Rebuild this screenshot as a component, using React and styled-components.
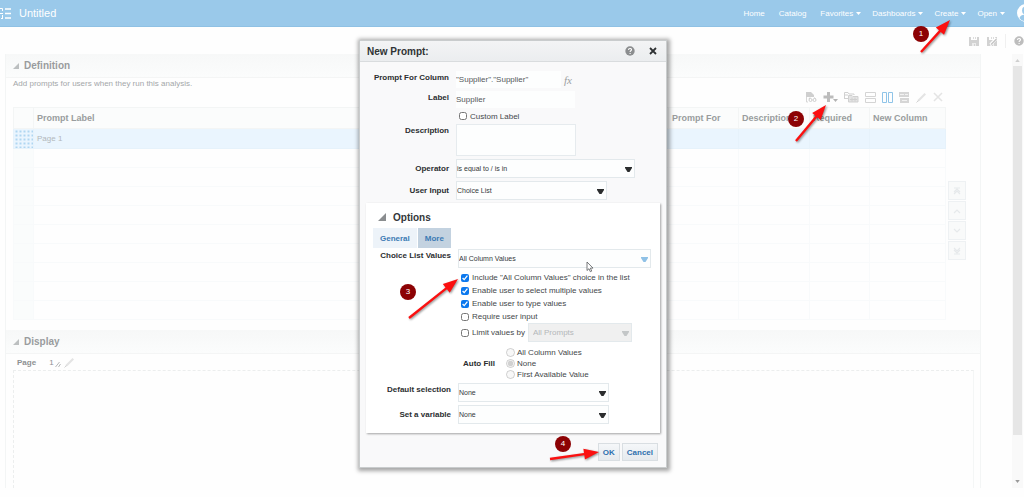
import { useState } from "react";
import styled, { createGlobalStyle } from "styled-components";

const EMPTY_ROWS = [1, 2, 3, 4, 5, 6, 7, 8, 9];

const App = () => {
  const [checks, setChecks] = useState({
    all: true,
    multiple: true,
    type: true,
    require: false,
  });

  const toggle = (key) => () =>
    setChecks((prev) => ({ ...prev, [key]: !prev[key] }));

  return (
    <Page>
      <GlobalStyle />
      <TopBar>
        <ListIcon />
        <AppTitle>Untitled</AppTitle>
        <Nav>
          <NavLink href="#home">Home</NavLink>
          <NavLink href="#catalog">Catalog</NavLink>
          <NavMenu label="Favorites" />
          <NavMenu label="Dashboards" />
          <NavMenu label="Create" />
          <NavMenu label="Open" />
          <Avatar />
        </Nav>
      </TopBar>

      <Toolbar>
        <IconButton aria-label="Save">
          <SaveIcon />
        </IconButton>
        <IconButton aria-label="Save as">
          <SaveIcon edit />
        </IconButton>
        <Divider />
        <IconButton aria-label="Help">
          <HelpIcon size={10} color="#bdbdbd" />
        </IconButton>
      </Toolbar>

      <Workspace>
        <Sections>
          <SectionHeader>
            <Disclosure color="#bcbfc0" />
            <SectionTitle>Definition</SectionTitle>
          </SectionHeader>
          <Definition>
            <Hint>Add prompts for users when they run this analysis.</Hint>
            <TableToolbar>
              <IconButton aria-label="Preview">
                <PreviewIcon />
              </IconButton>
              <IconButton aria-label="New">
                <PlusIcon />
              </IconButton>
              <IconButton aria-label="Duplicate">
                <FoldersIcon />
              </IconButton>
              <IconButton aria-label="Row based layout">
                <RowsIcon />
              </IconButton>
              <IconButton aria-label="Column based layout">
                <ColumnsIcon />
              </IconButton>
              <IconButton aria-label="Insert page break">
                <BreakIcon />
              </IconButton>
              <IconButton aria-label="Edit">
                <PencilIcon />
              </IconButton>
              <IconButton aria-label="Delete">
                <CrossIcon />
              </IconButton>
            </TableToolbar>
            <TableArea>
              <Table>
                <thead>
                  <tr>
                    <HeadCell $width="20px" />
                    <HeadCell>Prompt Label</HeadCell>
                    <HeadCell $width="70px">Prompt For</HeadCell>
                    <HeadCell $width="71px">Description</HeadCell>
                    <HeadCell $width="60px">Required</HeadCell>
                    <HeadCell $width="76px">New Column</HeadCell>
                  </tr>
                </thead>
                <tbody>
                  <SelectedRow>
                    <GripCell />
                    <Cell>Page 1</Cell>
                    <Cell />
                    <Cell />
                    <Cell />
                    <Cell />
                  </SelectedRow>
                  {EMPTY_ROWS.map((row) => (
                    <tr key={row}>
                      <Cell $head />
                      <Cell />
                      <Cell />
                      <Cell />
                      <Cell />
                      <Cell />
                    </tr>
                  ))}
                </tbody>
              </Table>
              <OrderButtons>
                <OrderButton aria-label="Move to top">
                  <OrderIcon d="M2 2h6M2 6l3-3 3 3M2 8l3-3 3 3" />
                </OrderButton>
                <OrderButton aria-label="Move up">
                  <OrderIcon d="M2 7l3-3 3 3" />
                </OrderButton>
                <OrderButton aria-label="Move down">
                  <OrderIcon d="M2 3l3 3 3-3" />
                </OrderButton>
                <OrderButton aria-label="Move to bottom">
                  <OrderIcon d="M2 8h6M2 2l3 3 3-3M2 4l3 3 3-3" />
                </OrderButton>
              </OrderButtons>
            </TableArea>
          </Definition>

          <SectionHeader>
            <Disclosure color="#bcbfc0" />
            <SectionTitle>Display</SectionTitle>
          </SectionHeader>
          <PageRow>
            <b>Page</b>
            <PageNumber>1</PageNumber>
            <SlashesIcon />
            <PencilIcon />
          </PageRow>
          <Canvas />
        </Sections>
        <ScrollTrack>
          <ScrollArrow up />
          <ScrollThumb />
          <ScrollArrow />
        </ScrollTrack>
      </Workspace>

      <Overlay>
        <Dialog role="dialog" aria-labelledby="dialog-title">
          <DialogHeader>
            <DialogTitle id="dialog-title">New Prompt:</DialogTitle>
            <IconButton aria-label="Help">
              <HelpIcon size={10} color="#8b8d8f" />
            </IconButton>
            <IconButton aria-label="Close">
              <CloseIcon />
            </IconButton>
          </DialogHeader>

          <DialogBody>
            <Row>
              <Label htmlFor="column">Prompt For Column</Label>
              <Inline>
                <TextInput
                  id="column"
                  $width="105px"
                  defaultValue={'"Supplier"."Supplier"'}
                />
                <Formula>fx</Formula>
              </Inline>
            </Row>
            <Row>
              <Label htmlFor="label">Label</Label>
              <TextInput id="label" $width="119px" defaultValue="Supplier" />
            </Row>
            <Row>
              <span />
              <CheckLabel $short>
                <Tick type="checkbox" />
                Custom Label
              </CheckLabel>
            </Row>
            <Row>
              <Label htmlFor="description">Description</Label>
              <TextArea id="description" />
            </Row>
            <Row $centered>
              <Label htmlFor="operator">Operator</Label>
              <Dropdown id="operator" width="179px" value="is equal to / is in" />
            </Row>
            <Row $centered>
              <Label htmlFor="input">User Input</Label>
              <Dropdown id="input" width="151px" value="Choice List" />
            </Row>
          </DialogBody>

          <Options>
            <OptionsHeader>
              <Disclosure color="#8a8d8f" size={8} />
              Options
            </OptionsHeader>
            <Tabs>
              <Tab type="button">General</Tab>
              <Tab type="button" $active>
                More
              </Tab>
            </Tabs>
            <OptionRow>
              <Label htmlFor="values">Choice List Values</Label>
              <div>
                <Dropdown
                  id="values"
                  width="193px"
                  value="All Column Values"
                  arrow="#8fc1e6"
                />
                <CheckList>
                  <CheckLabel>
                    <Tick
                      type="checkbox"
                      checked={checks.all}
                      onChange={toggle("all")}
                    />
                    Include "All Column Values" choice in the list
                  </CheckLabel>
                  <CheckLabel>
                    <Tick
                      type="checkbox"
                      checked={checks.multiple}
                      onChange={toggle("multiple")}
                    />
                    Enable user to select multiple values
                  </CheckLabel>
                  <CheckLabel>
                    <Tick
                      type="checkbox"
                      checked={checks.type}
                      onChange={toggle("type")}
                    />
                    Enable user to type values
                  </CheckLabel>
                  <CheckLabel>
                    <Tick
                      type="checkbox"
                      checked={checks.require}
                      onChange={toggle("require")}
                    />
                    Require user input
                  </CheckLabel>
                  <Inline>
                    <CheckLabel>
                      <Tick type="checkbox" />
                      Limit values by
                    </CheckLabel>
                    <Dropdown
                      width="104px"
                      value="All Prompts"
                      arrow="#c3c6c7"
                      aria-label="Limit values by"
                      disabled
                    />
                  </Inline>
                </CheckList>
                <AutoFill role="radiogroup" aria-labelledby="auto-fill">
                  <b id="auto-fill">Auto Fill</b>
                  <div>
                    <RadioLabel>
                      <Radio type="radio" name="fill" disabled />
                      All Column Values
                    </RadioLabel>
                    <RadioLabel>
                      <Radio type="radio" name="fill" defaultChecked disabled />
                      None
                    </RadioLabel>
                    <RadioLabel>
                      <Radio type="radio" name="fill" disabled />
                      First Available Value
                    </RadioLabel>
                  </div>
                </AutoFill>
              </div>
            </OptionRow>
            <OptionRow>
              <Label htmlFor="selection">Default selection</Label>
              <Dropdown id="selection" width="151px" value="None" />
            </OptionRow>
            <OptionRow $centered>
              <Label htmlFor="variable">Set a variable</Label>
              <Dropdown id="variable" width="151px" value="None" />
            </OptionRow>
          </Options>

          <DialogFooter>
            <Button type="button">OK</Button>
            <Button type="button">Cancel</Button>
          </DialogFooter>

          <Step $left="40px" $top="243px">
            3
          </Step>
          <Arrow left="44px" top="232px" from={[5, 45]} to={[54, 6]} />
          <Step $left="195px" $top="395px">
            4
          </Step>
          <Arrow left="185px" top="395px" from={[5, 23]} to={[54, 16]} />
          <Cursor />
        </Dialog>
      </Overlay>

      <Step $right="95px" $top="26px">
        1
      </Step>
      <Arrow right="48px" top="15px" from={[5, 37]} to={[34, 5]} />
      <Step $right="220px" $top="111px">
        2
      </Step>
      <Arrow right="173px" top="100px" from={[5, 41]} to={[35, 5]} />
    </Page>
  );
};

export default App;

const NavMenu = ({ label }) => (
  <MenuButton type="button">
    {label}
    <svg width="5" height="4" viewBox="0 0 5 4">
      <path d="M0 0h5L2.500 3z" fill="#fff" />
    </svg>
  </MenuButton>
);

const Dropdown = ({ width, value, arrow = "#2b2d2e", disabled, ...rest }) => (
  <SelectBox $width={width} $disabled={disabled}>
    <Select disabled={disabled} {...rest}>
      <option>{value}</option>
    </Select>
    <svg width="7" height="5" viewBox="0 0 7 5">
      <path d="M0 0h7v1L4.500 5h-2L0 1z" fill={arrow} />
    </svg>
  </SelectBox>
);

const Arrow = ({ from, to, ...place }) => {
  const [x1, y1] = from;
  const [x2, y2] = to;
  const length = Math.hypot(x2 - x1, y2 - y1);
  const angle = (Math.atan2(y2 - y1, x2 - x1) * 180) / Math.PI;
  const neck = length - 15;
  return (
    <ArrowSvg width="60" height="54" $place={place}>
      <g transform={`translate(${x1} ${y1}) rotate(${angle})`} fill="#fb1010">
        <path
          d={`M0 -1.2H${neck}V-5.5L${length} 0L${neck} 5.5V1.2H0z`}
        />
      </g>
    </ArrowSvg>
  );
};

const ListIcon = () => (
  <svg width="11" height="14" viewBox="0 0 11 14" fill="none" stroke="#fff">
    <path d="M5 3h6M5 7.500h6M5 12h6" strokeWidth="1.300" />
    <path d="M0 2.500h2.500M2.500 2.500V5M0 7.500h3M2.500 9v4M1 12.500h2" />
  </svg>
);

const Avatar = () => (
  <AvatarSvg width="20" height="20" viewBox="0 0 20 20">
    <circle cx="10" cy="10" r="9" fill="#fff" />
    <circle cx="10" cy="7.5" r="4" fill="#9ac9ea" />
    <path d="M3.500 15c1-3.200 4-3.200 6.500-3.200s5.500 0 6.500 3.200a8 8 0 0 1-13 0z" fill="#9ac9ea" />
  </AvatarSvg>
);

const SaveIcon = ({ edit }) => (
  <svg width="10" height="10" viewBox="0 0 10 10">
    <path d="M0 1h2v3h6V1h2v9H0z" fill="#d2d2d2" />
    <path d="M4 1h1v2H4zM6 1h1v2H6z" fill="#dcdcdc" />
    <path d="M3 7h4v3H6V8H5v2H3z" fill="#ececec" />
    {edit && <path d="M3.500 8.500L9.500 2.500" stroke="#fff" strokeWidth="3" />}
    {edit && <path d="M4 8.500L9.500 3" stroke="#c2c2c2" strokeWidth="1.300" />}
  </svg>
);

const HelpIcon = ({ size, color }) => (
  <svg width={size} height={size} viewBox="0 0 10 10">
    <circle cx="5" cy="5" r="4.700" fill={color} />
    <path
      d="M3.500 4c0-2 3-2 3-.2 0 1-1.400 1-1.400 2.100M5.100 7v1"
      fill="none"
      stroke="#fff"
      strokeWidth="1.100"
    />
  </svg>
);

const CloseIcon = () => (
  <svg width="8" height="8" viewBox="0 0 8 8">
    <path d="M1 1l6 6M7 1L1 7" stroke="#2e3133" strokeWidth="1.800" />
  </svg>
);

const PreviewIcon = () => (
  <svg width="12" height="11" viewBox="0 0 12 11">
    <path d="M1 0h5l3 3v2H1z" fill="#cfcfcf" />
    <path d="M1.500 5v5H3" fill="none" stroke="#d6d6d6" />
    <path
      d="M4 8a1.500 1.500 0 1 0 3 0a1.500 1.500 0 1 0-3 0M8 8a1.500 1.500 0 1 0 3 0a1.500 1.500 0 1 0-3 0M4 7l1-1.500M10.500 7L9.500 5.500"
      fill="none"
      stroke="#cdcdcd"
    />
  </svg>
);

const PlusIcon = () => (
  <svg width="15" height="11" viewBox="0 0 15 11">
    <path d="M4 0h3v3.500h3.500v3H7V10H4V6.500H.5v-3H4z" fill="#bcbcbc" />
    <path d="M10 7h5l-2.500 3z" fill="#b3b3b3" />
  </svg>
);

const FoldersIcon = () => (
  <svg width="15" height="11" viewBox="0 0 15 11" fill="none" stroke="#d0d0d0">
    <path d="M.5 7V.5h3.500l1 1.500h5V3M.5 6.500H4M1 3h3" />
    <path d="M4.500 10V3.500H8l1 1h5V10z" fill="#e4e4e4" />
    <path d="M6 7.500h7M8 5.500v4M11 5.500v4" />
  </svg>
);

const RowsIcon = () => (
  <svg width="11" height="11" viewBox="0 0 11 11" fill="none" stroke="#d4d4d4">
    <path d="M.5 .5h10v4H.5zM.5 6.500h10v4H.5z" />
  </svg>
);

const ColumnsIcon = () => (
  <svg width="11" height="11" viewBox="0 0 11 11" fill="none" stroke="#8fc4e8">
    <path d="M.5 .5h4v10h-4zM6.500 .5h4v10h-4z" />
  </svg>
);

const BreakIcon = () => (
  <svg width="11" height="11" viewBox="0 0 11 11">
    <path d="M0 0h10v5H0zM1 6h9v5H1z" fill="#d6d6d6" />
    <path d="M1 2.500h4M6 2.500h3M3 8.500h5" stroke="#f2f2f2" />
  </svg>
);

const PencilIcon = () => (
  <svg width="11" height="11" viewBox="0 0 11 11">
    <path d="M1 10L2 7.500 8.500 1 10 2.500 3.500 9z" fill="#e4e4e4" />
    <path d="M.5 10.500L2.500 8.500" stroke="#d2d2d2" />
  </svg>
);

const CrossIcon = () => (
  <svg width="10" height="10" viewBox="0 0 10 10">
    <path d="M1 1l8 8M9 1L1 9" stroke="#e4e4e4" strokeWidth="1.600" />
  </svg>
);

const SlashesIcon = () => (
  <svg width="6" height="12" viewBox="0 0 6 12">
    <path d="M.5 11l4-5M3.500 11l2-3" stroke="#b4b6b7" />
  </svg>
);

const OrderIcon = ({ d }) => (
  <svg width="10" height="10" viewBox="0 0 10 10">
    <path d={d} fill="none" stroke="#e6e9eb" strokeWidth="1.200" />
  </svg>
);

const Disclosure = ({ color, size = 6 }) => (
  <svg width={size} height={size} viewBox="0 0 8 8">
    <path d="M8 0v8H0z" fill={color} />
  </svg>
);

const ScrollArrow = ({ up }) => (
  <svg width="5" height="3" viewBox="0 0 6 4">
    <path d={up ? "M3 0l3 4H0z" : "M0 0h6L3 4z"} fill={up ? "#cfcfcf" : "#9a9a9a"} />
  </svg>
);

const Cursor = () => (
  <CursorSvg width="8" height="12" viewBox="0 0 8 12">
    <path
      d="M1 1v8.500l2-1.800 1.300 3 1.400-.6-1.300-3H7z"
      fill="#fff"
      stroke="#55595c"
      strokeWidth=".8"
    />
  </CursorSvg>
);

const GlobalStyle = createGlobalStyle`
  * {
    box-sizing: border-box;
  }

  body {
    margin: 0;
    background-color: #fefefe;
  }

  body, button, input, select, textarea {
    font-family: "Liberation Sans", Arial, sans-serif;
    font-size: 8px;
  }

  svg {
    display: block;
    flex: none;
  }
`;

const Page = styled.div`
  position: relative;
  display: flex;
  flex-direction: column;
  min-height: 100vh;
  padding-bottom: 9px;
  overflow: hidden;
  color: #55595c;
`;

const TopBar = styled.header`
  display: flex;
  align-items: center;
  height: 27px;
  overflow: hidden;
  background-color: #9ac9ea;
  border-bottom: 1px solid #8fc1e4;
  color: #fff;
`;

const AppTitle = styled.h1`
  margin: 0 0 0 8px;
  font-size: 11px;
  font-weight: 400;
`;

const Nav = styled.nav`
  display: flex;
  align-items: center;
  gap: 11px;
  margin-left: auto;
`;

const NavLink = styled.a`
  margin-right: 3px;
  color: #fff;
  text-decoration: none;
`;

const MenuButton = styled.button`
  display: flex;
  align-items: center;
  gap: 3px;
  padding: 0;
  border: none;
  background: none;
  color: #fff;

  svg {
    margin-top: 2px;
  }
`;

const AvatarSvg = styled.svg`
  margin-right: -12px;
`;

const Toolbar = styled.div`
  display: flex;
  align-items: center;
  justify-content: flex-end;
  gap: 8px;
  height: 27px;
`;

const IconButton = styled.button`
  display: flex;
  padding: 0;
  border: none;
  background: none;
  cursor: pointer;
`;

const Divider = styled.span`
  width: 1px;
  height: 14px;
  background-color: #f0f0f0;
`;

const Workspace = styled.div`
  display: flex;
  flex: 1;
  padding: 0 1px 0 5px;
`;

const Sections = styled.main`
  display: flex;
  flex: 1;
  flex-direction: column;
  margin-right: 31px;
  border: solid #f3f5f5;
  border-width: 0 1px;
`;

const SectionHeader = styled.div`
  display: flex;
  align-items: center;
  gap: 5px;
  height: 24px;
  padding: 0 7px;
  background: linear-gradient(#f7f8f8, #fbfcfc);
  border-bottom: 1px solid #f4f5f5;
`;

const SectionTitle = styled.h2`
  margin: 0;
  font-size: 10px;
  color: #999c9e;
`;

const Definition = styled.section`
  padding: 0 14px 10px 7px;
`;

const Hint = styled.p`
  margin: 0;
  line-height: 11px;
  color: #a4a7a9;
`;

const TableToolbar = styled.div`
  display: flex;
  align-items: center;
  justify-content: flex-end;
  gap: 6px;
  height: 18px;
  padding: 0 23px 2px 0;
`;

const TableArea = styled.div`
  display: flex;
  align-items: center;
  gap: 2px;
`;

const Table = styled.table`
  flex: 1;
  table-layout: fixed;
  border-collapse: collapse;
`;

const HeadCell = styled.th`
  width: ${({ $width }) => $width || "auto"};
  height: 21px;
  padding: 0 3px;
  border: 1px solid #f3f5f5;
  background-color: #fbfcfc;
  font-size: 9px;
  text-align: left;
  white-space: nowrap;
  color: #999c9e;
`;

const Cell = styled.td`
  height: 19px;
  padding: 0 3px;
  border: 1px solid #f8fafb;
  background-color: ${({ $head }) => ($head ? "#fafcfc" : "transparent")};
  color: #b2b8bc;
`;

const GripCell = styled(Cell)`
  background-image: radial-gradient(circle, #b0d6f1 1px, transparent 1px);
  background-size: 4px 4px;
`;

const SelectedRow = styled.tr`
  background-color: #eaf5fe;

  td {
    height: 20px;
    border-color: #e6f2fb;
  }
`;

const OrderButtons = styled.div`
  display: flex;
  flex-direction: column;
  gap: 1px;
  margin-top: 14px;
`;

const OrderButton = styled.button`
  display: flex;
  align-items: center;
  justify-content: center;
  width: 18px;
  height: 19px;
  padding: 0;
  border: 1px solid #eef1f3;
  background-color: #f9fafa;
`;

const PageRow = styled.div`
  display: flex;
  align-items: center;
  height: 16px;
  padding: 0 11px;
  color: #8e9193;

  svg:last-child {
    margin-left: 3px;
  }
`;

const PageNumber = styled.span`
  margin: 0 1px 0 13px;
`;

const Canvas = styled.div`
  flex: 1;
  margin: 0 6px 0 7px;
  border: 1px dashed #eceeee;
  border-right: 1px solid #f4f6f6;
  border-bottom: none;
`;

const ScrollTrack = styled.div`
  display: flex;
  flex-direction: column;
  align-items: center;
  gap: 4px;
  width: 11px;
  padding: 5px 1px;
  background-color: #f9f9f9;
`;

const ScrollThumb = styled.div`
  width: 100%;
  height: 87%;
  margin-bottom: auto;
  background-color: #e6e6e6;
`;

const Overlay = styled.div`
  position: absolute;
  inset: 0;
  display: flex;
  align-items: flex-start;
  justify-content: center;
  padding: 40px 0 0 2px;
`;

const Dialog = styled.div`
  position: relative;
  width: 308px;
  border: 1px solid #c9cccd;
  background-color: #f9f9fa;
  box-shadow: 1px 1px 4px 2px rgba(0, 0, 0, 0.35);
`;

const DialogHeader = styled.div`
  display: flex;
  align-items: center;
  gap: 14px;
  height: 21px;
  padding: 0 9px 0 7px;
  border-bottom: 1px solid #d9dcde;
  background: linear-gradient(#f3f4f5, #ebedef);
`;

const DialogTitle = styled.h2`
  flex: 1;
  margin: 0;
  font-size: 10px;
  color: #2f3335;
`;

const DialogBody = styled.div`
  display: flex;
  flex-direction: column;
  gap: 3px;
  padding: 9px 7px 3px;
`;

const Row = styled.div`
  display: grid;
  grid-template-columns: 82px 1fr;
  column-gap: 7px;
  align-items: ${({ $centered }) => ($centered ? "center" : "start")};
`;

const Label = styled.label`
  line-height: 14px;
  font-weight: 700;
  text-align: right;
  white-space: nowrap;
  color: #2b2e30;
`;

const Inline = styled.div`
  display: flex;
  align-items: center;
  gap: 3px;
`;

const TextInput = styled.input`
  width: ${({ $width }) => $width};
  height: 17px;
  padding: 0;
  border: none;
  background-color: #fdfefe;
  color: #55595c;
`;

const TextArea = styled.textarea`
  width: 120px;
  height: 32px;
  border: 1px solid #e6ebee;
  background-color: #fdfefe;
  resize: none;
`;

const Formula = styled.i`
  font-family: "Liberation Serif", "Times New Roman", serif;
  font-size: 11px;
  line-height: 12px;
  color: #9b9ea0;
`;

const SelectBox = styled.span`
  display: flex;
  align-items: center;
  width: ${({ $width }) => $width};
  height: 19px;
  padding-right: 2px;
  border: 1px solid #e3e9ec;
  background-color: ${({ $disabled }) => ($disabled ? "#f0f0f0" : "#fdfefe")};

  select {
    padding-left: ${({ $disabled }) => ($disabled ? "4px" : "0")};
    font-size: ${({ $disabled }) => ($disabled ? "8px" : "7px")};
  }

  svg {
    margin: 2px 0 0 -8px;
    pointer-events: none;
  }
`;

const Select = styled.select`
  flex: 1;
  height: 100%;
  border: none;
  appearance: none;
  background: transparent;
  color: #34383a;

  &:disabled {
    color: #b4b7b9;
    opacity: 1;
  }
`;

const CheckLabel = styled.label`
  display: flex;
  align-items: center;
  gap: 3px;
  height: ${({ $short }) => ($short ? "10px" : "13px")};
  padding-left: 3px;
  white-space: nowrap;
  color: #44484a;
`;

const Tick = styled.input`
  width: 8px;
  height: 8px;
  margin: 0;
  accent-color: #0b78ee;
`;

const CheckList = styled.div`
  padding-top: 3px;
`;

const Options = styled.section`
  display: flex;
  flex-direction: column;
  gap: 3px;
  margin: 0 6px;
  padding: 8px 6px 9px 7px;
  background-color: #fff;
  box-shadow: 1px 1px 2px rgba(0, 0, 0, 0.35);
`;

const OptionsHeader = styled.h3`
  display: flex;
  align-items: center;
  gap: 7px;
  height: 12px;
  margin: 0 0 2px;
  padding-left: 5px;
  font-size: 10px;
  color: #33373a;
`;

const Tabs = styled.div`
  display: flex;
  gap: 1px;
  margin-bottom: -2px;
`;

const Tab = styled.button`
  height: 20px;
  padding: 0 7px;
  border: none;
  background-color: ${({ $active }) => ($active ? "#c3d2e0" : "#edf3f9")};
  font-weight: 700;
  color: #3c7ab4;
`;

const OptionRow = styled(Row)`
  grid-template-columns: 78px 1fr;
`;

const AutoFill = styled.div`
  display: flex;
  align-items: center;
  gap: 11px;
  padding: 5px 0 0 5px;
  color: #2b2e30;
`;

const RadioLabel = styled.label`
  display: flex;
  align-items: center;
  gap: 2px;
  height: 11px;
  color: #44484a;
`;

const Radio = styled.input`
  width: 9px;
  height: 9px;
  margin: 0;
`;

const DialogFooter = styled.div`
  display: flex;
  justify-content: flex-end;
  gap: 2px;
  padding: 10px 8px 6px;
`;

const Button = styled.button`
  height: 18px;
  padding: 0 4px;
  border: 1px solid #d9dee2;
  background: linear-gradient(#f5f7f9, #e6eaee);
  font-weight: 700;
  color: #2f70ae;
`;

const Step = styled.span`
  position: absolute;
  top: ${({ $top }) => $top};
  left: ${({ $left }) => $left || "auto"};
  right: ${({ $right }) => $right || "auto"};
  width: 16px;
  height: 16px;
  border-radius: 50%;
  background-color: #8c0204;
  font-size: 8px;
  line-height: 16px;
  text-align: center;
  color: #fff;
`;

const ArrowSvg = styled.svg`
  position: absolute;
  top: ${({ $place }) => $place.top};
  left: ${({ $place }) => $place.left || "auto"};
  right: ${({ $place }) => $place.right || "auto"};
  filter: drop-shadow(1px 1px 1px rgba(0, 0, 0, 0.45));
  pointer-events: none;
`;

const CursorSvg = styled.svg`
  position: absolute;
  top: 220px;
  left: 226px;
`;
